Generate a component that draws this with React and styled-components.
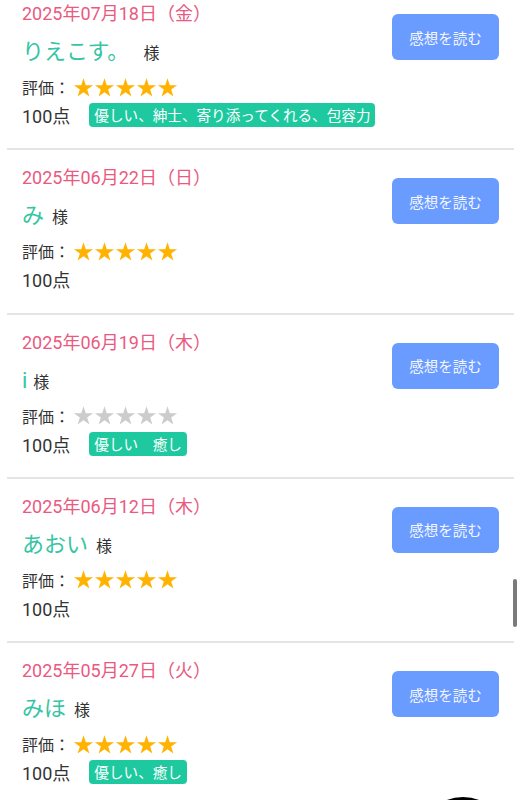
import React from "react";
import styled, { createGlobalStyle } from "styled-components";

const Global = createGlobalStyle`
  html, body { margin: 0; padding: 0; background: #fff; overflow: hidden; }
  body { font-family: Roboto, "Noto Sans CJK JP", sans-serif; color: #333; }
`;

const Page = styled.div`
  position: relative;
  width: 521px;
  height: 800px;
  overflow: hidden;
`;

const List = styled.div`
  margin: -14px 7px 0 7px;
`;

const Card = styled.div`
  display: flex;
  justify-content: space-between;
  align-items: flex-start;
  padding: 15px 15px 19.3px 15px;
  border-bottom: 2px solid #e4e4e4;
`;

const Info = styled.div`
  display: flex;
  flex-direction: column;
`;

const DateText = styled.div`
  color: #ea5a80;
  font-size: 18px;
  height: 26px;
  line-height: 26px;
`;

const NameRow = styled.div`
  display: flex;
  align-items: baseline;
  margin-top: 8px;
  height: 34px;
  line-height: 34px;
  overflow: visible;
`;

const Name = styled.span`
  color: #36c5a3;
  font-size: 22px;
  line-height: 34px;
`;

const Sama = styled.span`
  font-size: 16px;
  line-height: 34px;
  color: #333;
  margin-left: ${(p) => p.$gap}px;
`;

const RatingRow = styled.div`
  display: flex;
  align-items: center;
  margin-top: 6px;
  height: 24px;
  font-size: 16px;
`;

const Stars = styled.div`
  display: flex;
  margin-left: 3px;
`;

const ScoreRow = styled.div`
  display: flex;
  align-items: center;
  height: 28px;
  margin-top: 2px;
  font-size: 18px;
`;

const Tag = styled.span`
  margin-left: ${(p) => p.$ml}px;
  background: #1ec9a0;
  color: #fff;
  font-family: "Noto Sans CJK JP", sans-serif;
  font-size: 14.6px;
  line-height: 24px;
  height: 24px;
  padding: 0 5px;
  border-radius: 4px;
  white-space: pre;
`;

const ReadButton = styled.button`
  width: 107px;
  height: 46px;
  margin-top: 13px;
  border: none;
  border-radius: 6px;
  background: #6a9bff;
  color: #f4f7ff;
  font-family: "Noto Sans CJK JP", sans-serif;
  font-size: 14.5px;
  padding: 0;
`;

const Scrollbar = styled.div`
  position: absolute;
  left: 513px;
  top: 579px;
  width: 4px;
  height: 48px;
  border-radius: 2px;
  background: #7a7a7a;
`;

const Fab = styled.div`
  position: absolute;
  left: 418px;
  top: 797px;
  width: 90px;
  height: 90px;
  border-radius: 50%;
  background: #000;
`;

const Star = ({ on }) => (
  <svg width="21" height="21" viewBox="0 0 24 24">
    <path
      d="M12 1.5 L14.58 9.45 L22.94 9.45 L16.18 14.36 L18.76 22.3 L12 17.39 L5.24 22.3 L7.82 14.36 L1.06 9.45 L9.42 9.45 Z"
      fill={on ? "#ffb300" : "#cccccc"}
    />
  </svg>
);

const reviews = [
  { date: "2025年07月18日（金）", name: "りえこす。", gap: 14, stars: 5, tag: "優しい、紳士、寄り添ってくれる、包容力" },
  { date: "2025年06月22日（日）", name: "み", gap: 8, stars: 5, tag: null },
  { date: "2025年06月19日（木）", name: "i", gap: 6, stars: 0, tag: "優しい　癒し" },
  { date: "2025年06月12日（木）", name: "あおい", gap: 8, stars: 5, tag: null },
  { date: "2025年05月27日（火）", name: "みほ", gap: 8, stars: 5, tag: "優しい、癒し" },
];

export default function App() {
  return (
    <Page>
      <Global />
      <List>
        {reviews.map((r, i) => (
          <Card key={i}>
            <Info>
              <DateText>{r.date}</DateText>
              <NameRow>
                <Name>{r.name}</Name>
                <Sama $gap={r.gap}>様</Sama>
              </NameRow>
              <RatingRow>
                評価：
                <Stars>
                  {[0, 1, 2, 3, 4].map((k) => (
                    <Star key={k} on={k < r.stars} />
                  ))}
                </Stars>
              </RatingRow>
              <ScoreRow>
                100点
                {r.tag && <Tag $ml={19}>{r.tag}</Tag>}
              </ScoreRow>
            </Info>
            <ReadButton>感想を読む</ReadButton>
          </Card>
        ))}
      </List>
      <Scrollbar />
      <Fab />
    </Page>
  );
}
